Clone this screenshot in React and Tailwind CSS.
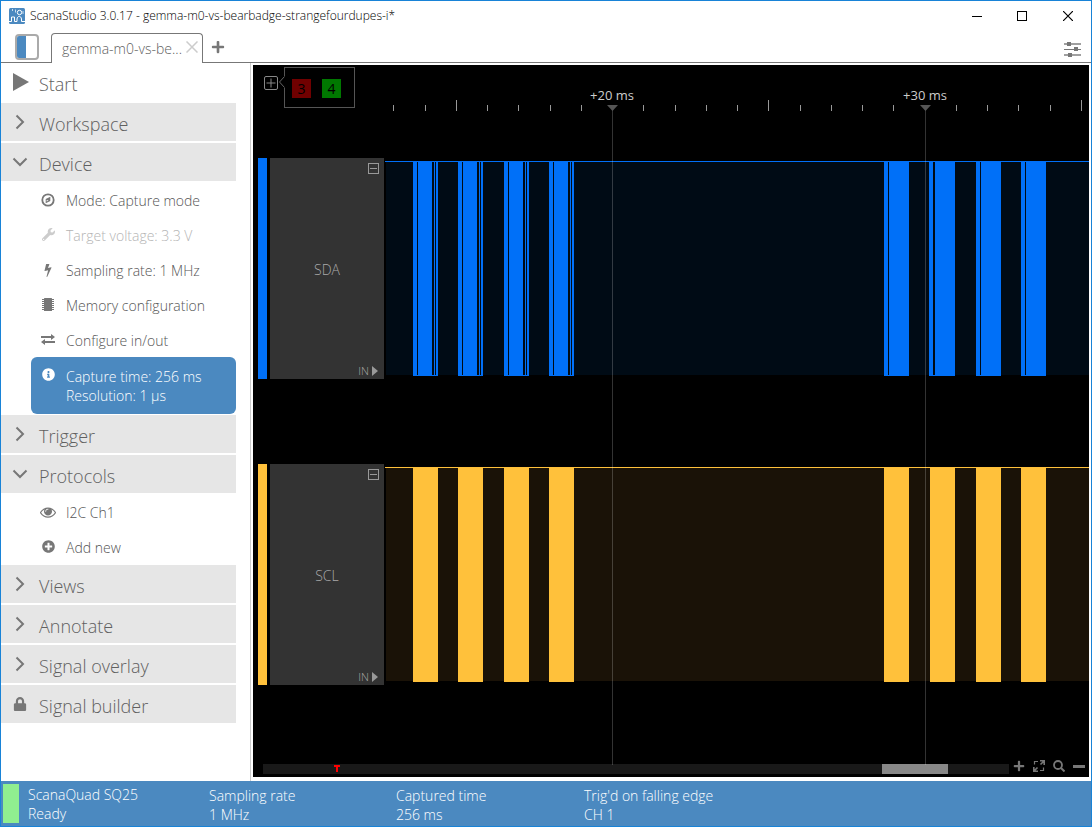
import { useState } from 'react';
import { FaInfoCircle, FaLock, FaPlus, FaPlusCircle, FaWrench } from 'react-icons/fa';

const WAVE_WIDTH = 705;

const ChevronRight = () => (
  <svg width="16" height="16" viewBox="0 0 16 16" fill="none" stroke="currentColor" strokeWidth="2">
    <path d="M4.500 1.500 11 8l-6.500 6.500" />
  </svg>
);

const ChevronDown = () => (
  <svg width="16" height="16" viewBox="0 0 16 16" fill="none" stroke="currentColor" strokeWidth="2">
    <path d="M1.500 4.500 8 11l6.500-6.500" />
  </svg>
);

const CompassIcon = () => (
  <svg width="14" height="14" viewBox="0 0 14 14" fill="none" stroke="currentColor">
    <circle cx="7" cy="7" r="5.700" strokeWidth="1.800" />
    <path d="M9.300 3.800v4.200L4.700 10.200V6z" fill="currentColor" stroke="none" />
    <path d="M5.700 6.900v1.700L7.600 7.600z" fill="white" stroke="none" />
  </svg>
);

const BoltIcon = () => (
  <svg width="14" height="14" viewBox="-448 0 1792 1792" fill="currentColor">
    <path d="M885 566q18 20 7 44l-540 1157q-13 25-42 25-4 0-14-2-17-5-25.500-19t-4.500-30l197-808-406 101q-4 1-12 1-18 0-31-11-18-15-13-39l201-825q4-14 16-23t28-9h328q19 0 32 12.500t13 29.500q0 8-5 18l-171 463 396-98q8-2 12-2 19 0 34 15z" />
  </svg>
);

const ChipIcon = () => (
  <svg width="14" height="14" viewBox="0 0 14 14" fill="currentColor">
    <rect x="3" y="0" width="8" height="13" rx="0.500" />
    <path d="M1 1.500h2M1 3.500h2M1 5.500h2M1 7.500h2M1 9.500h2M1 11.500h2M11 1.500h2M11 3.500h2M11 5.500h2M11 7.500h2M11 9.500h2M11 11.500h2" stroke="currentColor" />
  </svg>
);

const ExchangeIcon = () => (
  <svg width="14" height="14" viewBox="0 0 14 14" fill="currentColor">
    <path d="M0 3h10V1l4 3-4 3V5H0zM14 8H4V6L0 9l4 3v-2h10z" />
  </svg>
);

const EyeIcon = () => (
  <svg width="16" height="16" viewBox="0 0 1792 1792" fill="currentColor">
    <path d="M1664 960q-152-236-381-353 61 104 61 225 0 185-131.500 316.500t-316.500 131.500-316.500-131.500-131.500-316.500q0-121 61-225-229 117-381 353 133 205 333.500 326.500t434.500 121.500 434.500-121.500 333.500-326.500zm-720-384q0-20-14-34t-34-14q-125 0-214.500 89.500t-89.500 214.500q0 20 14 34t34 14 34-14 14-34q0-86 61-147t147-61q20 0 34-14t14-34zm848 384q0 34-20 69-140 230-376.500 368.500t-499.500 138.500-499.500-139-376.500-368q-20-35-20-69t20-69q140-229 376.500-368t499.500-139 499.500 139 376.500 368q20 35 20 69z" />
  </svg>
);

const AppLogo = () => (
  <svg width="16" height="16" viewBox="0 0 16 16">
    <rect width="16" height="16" rx="1.500" fill="#4b89c0" />
    <g fill="none" stroke="white">
      <path d="M0 13.500h2.500V9h3v4.500H8V11c.5-3.500 4-3.500 4.500 0v2.500H16" />
      <circle cx="10.500" cy="4.500" r="2.200" />
      <path d="M3.500 1v2M6.500 1.500v3M14 3v3" strokeOpacity="0.700" />
    </g>
  </svg>
);

const SlidersIcon = () => (
  <svg width="18" height="16" viewBox="0 0 18 16" shapeRendering="crispEdges">
    <path d="M0 3h17M0 14h17" stroke="#a0a0a0" strokeWidth="2" />
    <path d="M0 8.500h17" stroke="#777" />
    <path d="M3 1h4v4H3zM10 6h4v4h-4zM4 12h4v4H4z" fill="#777" />
  </svg>
);

const ExpandIcon = () => (
  <svg width="12" height="12" viewBox="0 0 12 12" fill="none" stroke="currentColor">
    <path d="M7 .8h4.200V5M5 11.200H.8V7M11 1 7.500 4.500M1 11l3.500-3.500" strokeWidth="1.600" />
    <path d="M1.500 4.500V1.500H5M10.500 7.500v3H7" strokeWidth="1.200" />
  </svg>
);

const SearchIcon = () => (
  <svg width="12" height="12" viewBox="0 0 12 12" fill="none" stroke="currentColor">
    <circle cx="5" cy="5" r="4" strokeWidth="1.800" />
    <path d="m8 8 3.500 3.500" strokeWidth="2" />
  </svg>
);

const deviceItems = [
  { label: 'Mode: Capture mode', icon: CompassIcon },
  { label: 'Target voltage: 3.3 V', icon: FaWrench, disabled: true },
  { label: 'Sampling rate: 1 MHz', icon: BoltIcon },
  { label: 'Memory configuration', icon: ChipIcon },
  { label: 'Configure in/out', icon: ExchangeIcon },
];

const protocolItems = [
  { label: 'I2C Ch1', icon: EyeIcon },
  { label: 'Add new', icon: FaPlusCircle },
];

const burst = (x) => [[x, 4], [x + 5, 14], [x + 21, 1], [x + 23, 2]];

const channels = [
  {
    name: 'SDA',
    color: '#0070f8',
    fill: '#000b15',
    bars: [
      ...burst(29), ...burst(74), ...burst(120), ...burst(165),
      [500, 4], [505, 20], [545, 4], [551, 20], [592, 4], [597, 20], [637, 4], [642, 20],
    ],
    packets: [29, 74, 120, 165, 500, 545, 592, 637],
  },
  {
    name: 'SCL',
    color: '#ffc13b',
    fill: '#1a1207',
    bars: [[29, 25], [74, 25], [120, 25], [165, 25], [500, 25], [546, 25], [592, 25], [637, 25]],
    packets: [],
  },
];

const markers = [
  { label: '+20 ms', x: 228 },
  { label: '+30 ms', x: 541 },
];

const ticks = [];
for (let i = -7; i <= 15; i++) {
  if (i % 10 !== 0) {
    ticks.push({ x: Math.round(228.1 + i * 31.26), tall: i % 5 === 0 });
  }
}

const percent = (x) => `${(x / WAVE_WIDTH) * 100}%`;

const Section = ({ title, open, locked, onToggle, children }) => (
  <section>
    <button
      type="button"
      onClick={onToggle}
      aria-expanded={open}
      className={`flex h-[38px] w-full items-center bg-[#e6e6e6] pl-[11px] text-left text-lg text-[#606060] ${open ? '' : 'mb-0.5'}`}
    >
      <span className="mr-[11px] flex w-4 justify-center text-[#777]">
        {locked ? <FaLock size={14} /> : open ? <ChevronDown /> : <ChevronRight />}
      </span>
      <span className="pt-[3px]">{title}</span>
    </button>
    {open && <div className="py-px">{children}</div>}
  </section>
);

const SideItem = ({ label, icon: Icon, disabled }) => (
  <button
    type="button"
    disabled={disabled}
    className={`flex h-[35px] w-full items-center pl-[39px] text-left text-sm ${disabled ? 'text-[#b4b4b4]' : 'text-[#555]'}`}
  >
    <span className={`mr-2.5 flex w-4 justify-center ${disabled ? 'text-[#ccc]' : 'text-[#777]'}`}>
      <Icon size={13} />
    </span>
    <span className="pt-0.5">{label}</span>
  </button>
);

const TitleBar = () => (
  <header className="flex h-[30px] items-center bg-white pl-2 text-black">
    <AppLogo />
    <h1 className="ml-[5px] flex-1 text-xs">ScanaStudio 3.0.17 - gemma-m0-vs-bearbadge-strangefourdupes-i*</h1>
    <button type="button" aria-label="Minimize" className="flex h-full w-[45px] items-center justify-center">
      <svg width="10" height="10" shapeRendering="crispEdges"><path d="M0 5.500h10" stroke="black" /></svg>
    </button>
    <button type="button" aria-label="Maximize" className="flex h-full w-[45px] items-center justify-center">
      <svg width="10" height="10" shapeRendering="crispEdges"><path d="M.5.5h9v9h-9z" fill="none" stroke="black" /></svg>
    </button>
    <button type="button" aria-label="Close" className="flex h-full w-[47px] items-center justify-center">
      <svg width="10" height="10"><path d="m0 0 10 10M10 0 0 10" stroke="black" strokeWidth="1.200" /></svg>
    </button>
  </header>
);

const TabBar = () => (
  <nav className="flex h-8 items-end">
    <div className="flex h-full w-[50px] items-center border-b border-[#777] pl-3.5">
      <button type="button" aria-label="Toggle sidebar" className="flex h-[26px] w-6 overflow-hidden rounded border-2 border-[#aaa]">
        <span className="h-full w-[9px] bg-[#4b89c0]" />
      </button>
    </div>
    <div className="flex h-[30px] w-[152px] items-center rounded-t border-x border-t border-[#777] pl-2.5 pr-1">
      <button type="button" className="flex-1 whitespace-nowrap text-left text-sm text-[#606060]">gemma-m0-vs-be...</button>
      <button type="button" aria-label="Close tab" className="mb-[3px]">
        <svg width="12" height="12"><path d="m.5.5 11 11M11.500.5l-11 11" stroke="#ccc" strokeWidth="1.500" /></svg>
      </button>
    </div>
    <div className="flex h-full flex-1 items-center justify-between border-b border-[#777] pl-2 pr-[9px]">
      <button type="button" aria-label="New tab" className="text-[#777]"><FaPlus size={14} /></button>
      <button type="button" aria-label="Settings" className="pt-1"><SlidersIcon /></button>
    </div>
  </nav>
);

const Sidebar = () => {
  const [open, setOpen] = useState({ Device: true, Protocols: true });
  const toggle = (name) => setOpen({ ...open, [name]: !open[name] });

  return (
    <aside className="w-[250px] shrink-0 border-r border-[#ccc] pr-3.5">
      <button type="button" className="flex h-10 w-full items-center pl-3 text-left text-lg text-[#606060]">
        <svg width="16" height="18" viewBox="0 0 16 18" className="mb-0.5 mr-2.5"><path d="M0 0v18l16-9z" fill="#777" /></svg>
        <span className="pt-px">Start</span>
      </button>
      <Section title="Workspace" open={!!open.Workspace} onToggle={() => toggle('Workspace')} />
      <Section title="Device" open={!!open.Device} onToggle={() => toggle('Device')}>
        {deviceItems.map((item) => <SideItem key={item.label} {...item} />)}
        <div className="ml-[30px] flex h-[57px] rounded-md bg-[#4b89c0] pl-[11px] pt-2.5 text-sm leading-[19px] text-white">
          <FaInfoCircle size={13} className="mr-[11px] mt-px" />
          <p>Capture time: 256 ms<br />Resolution: 1 µs</p>
        </div>
      </Section>
      <Section title="Trigger" open={!!open.Trigger} onToggle={() => toggle('Trigger')} />
      <Section title="Protocols" open={!!open.Protocols} onToggle={() => toggle('Protocols')}>
        {protocolItems.map((item) => <SideItem key={item.label} {...item} />)}
      </Section>
      <Section title="Views" open={!!open.Views} onToggle={() => toggle('Views')} />
      <Section title="Annotate" open={!!open.Annotate} onToggle={() => toggle('Annotate')} />
      <Section title="Signal overlay" open={!!open.Overlay} onToggle={() => toggle('Overlay')} />
      <Section title="Signal builder" open={false} locked />
    </aside>
  );
};

const Ruler = () => (
  <div className="flex h-[93px]">
    <div className="flex w-[131px] shrink-0 items-start pt-0.5">
      <button type="button" aria-label="Add channel" className="ml-[11px] mt-[9px]">
        <svg width="14" height="14" viewBox="0 0 14 14" fill="none" stroke="#888">
          <rect x=".5" y=".5" width="13" height="13" rx="1.500" />
          <path d="M2.500 7h9M7 2.500v9" />
        </svg>
      </button>
      <svg width="6" height="12" viewBox="0 0 6 12" className="z-10 -mr-px ml-px mt-[9px]">
        <path d="M5.500 0v12" stroke="black" />
        <path d="M5.500.5.5 6l5 5.500" fill="none" stroke="#666" />
      </svg>
      <div className="flex h-[41px] w-[71px] gap-[11px] border border-[#555] pl-[7px] pt-[11px] text-sm font-normal text-black">
        <button type="button" className="h-[19px] w-[19px] bg-[#700000] text-center leading-[19px]">3</button>
        <button type="button" className="h-[19px] w-[19px] bg-[#007800] text-center leading-[19px]">4</button>
      </div>
    </div>
    <div className="relative flex-1">
      <svg className="h-[93px] w-full" viewBox="0 0 705 93" preserveAspectRatio="none" shapeRendering="crispEdges">
        {ticks.map((t) => (
          <rect key={t.x} x={t.x} y={t.tall ? 35 : 40} width="1" height={t.tall ? 11 : 6} fill="#999" />
        ))}
      </svg>
      {markers.map((m) => (
        <div key={m.label} className="absolute top-[21px] -ml-8 w-16 text-center text-[13px] font-normal leading-[18px] text-[#ccc]" style={{ left: percent(m.x) }}>
          {m.label}
        </div>
      ))}
    </div>
  </div>
);

const Channel = ({ name, color, fill, bars, packets }) => (
  <div className="flex h-[221px]">
    <div className="ml-[5px] mr-[3px] w-[9px] shrink-0" style={{ backgroundColor: color }} />
    <div className="flex w-[114px] shrink-0 flex-col justify-between bg-[#333] text-sm text-[#aaa]">
      <button type="button" aria-label={`Collapse ${name}`} className="mr-[5px] mt-[5px] self-end">
        <svg width="11" height="11" shapeRendering="crispEdges"><path d="M.5.5h10v10H.5zM2 5.500h7" fill="none" stroke="#999" /></svg>
      </button>
      <span className="text-center">{name}</span>
      <div className="mb-0.5 mr-[5px] flex items-center gap-[3px] self-end text-[11px] leading-3">
        IN
        <svg width="7" height="10"><path d="M0 0v10l6-5z" fill="#999" /></svg>
      </div>
    </div>
    <svg className="mt-[3px] h-[215px] min-w-0 flex-1" viewBox="0 0 705 215" preserveAspectRatio="none" shapeRendering="crispEdges">
      <rect x="2" width="703" height="214" fill={fill} />
      <rect x="1" width="704" height="1" fill={color} />
      {bars.map(([x, w]) => <rect key={x} x={x} width={w} height="215" fill={color} />)}
      {packets.map((x) => <rect key={x} x={x} y="214" width="25" height="1" fill={color} />)}
    </svg>
  </div>
);

const Scope = () => (
  <main className="relative mb-1 mr-0.5 ml-0.5 mt-0.5 flex min-w-0 flex-1 flex-col bg-black">
    <Ruler />
    <Channel {...channels[0]} />
    <div className="h-[85px]" />
    <Channel {...channels[1]} />
    <div className="min-h-6 flex-1" />
    <div className="flex items-end pb-[3px] pl-2.5 pr-1">
      <div className="relative h-2.5 flex-1 bg-[#191919]">
        <div className="absolute left-[83%] h-2.5 w-[66px] bg-[#888]" />
        <svg className="absolute left-[71px] top-px" width="6" height="7" shapeRendering="crispEdges">
          <path d="M0 0h6v2H4v5H2V2H0z" fill="red" />
        </svg>
      </div>
      <div className="mb-0.5 ml-1 flex gap-2 text-[#777]">
        <button type="button" aria-label="Zoom in"><FaPlus size={12} /></button>
        <button type="button" aria-label="Fit"><ExpandIcon /></button>
        <button type="button" aria-label="Zoom to selection"><SearchIcon /></button>
        <button type="button" aria-label="Zoom out">
          <svg width="12" height="12"><path d="M0 5h12v3H0z" fill="currentColor" /></svg>
        </button>
      </div>
    </div>
    {/* time markers run over both channels */}
    <div className="pointer-events-none absolute bottom-3 left-[131px] right-0 top-10">
      {markers.map((m) => (
        <div key={m.label} className="absolute inset-y-0 w-px bg-white/20" style={{ left: percent(m.x) }}>
          <svg width="11" height="6" className="absolute -left-[5px] top-0"><path d="M0 0h11L5.500 6z" fill="#555" /></svg>
        </div>
      ))}
    </div>
  </main>
);

const StatusBar = () => (
  <footer className="flex h-[45px] bg-[#4b89c0] py-[3px] pl-0.5 text-sm leading-[19px] text-white">
    <div className="mr-[9px] w-4 shrink-0 bg-[#90ee90]" />
    <p className="w-[181px] pt-px">ScanaQuad SQ25<br />Ready</p>
    <p className="w-[187px] pt-0.5">Sampling rate<br />1 MHz</p>
    <p className="w-[188px] pt-0.5">Captured time<br />256 ms</p>
    <p className="pt-0.5">Trig'd on falling edge<br />CH 1</p>
  </footer>
);

const App = () => (
  <div className="flex min-h-screen flex-col border border-[#1883d7] bg-white font-['Open_Sans','Noto_Sans',sans-serif] font-light">
    <TitleBar />
    <TabBar />
    <div className="flex flex-1">
      <Sidebar />
      <Scope />
    </div>
    <StatusBar />
  </div>
);

export default App;
